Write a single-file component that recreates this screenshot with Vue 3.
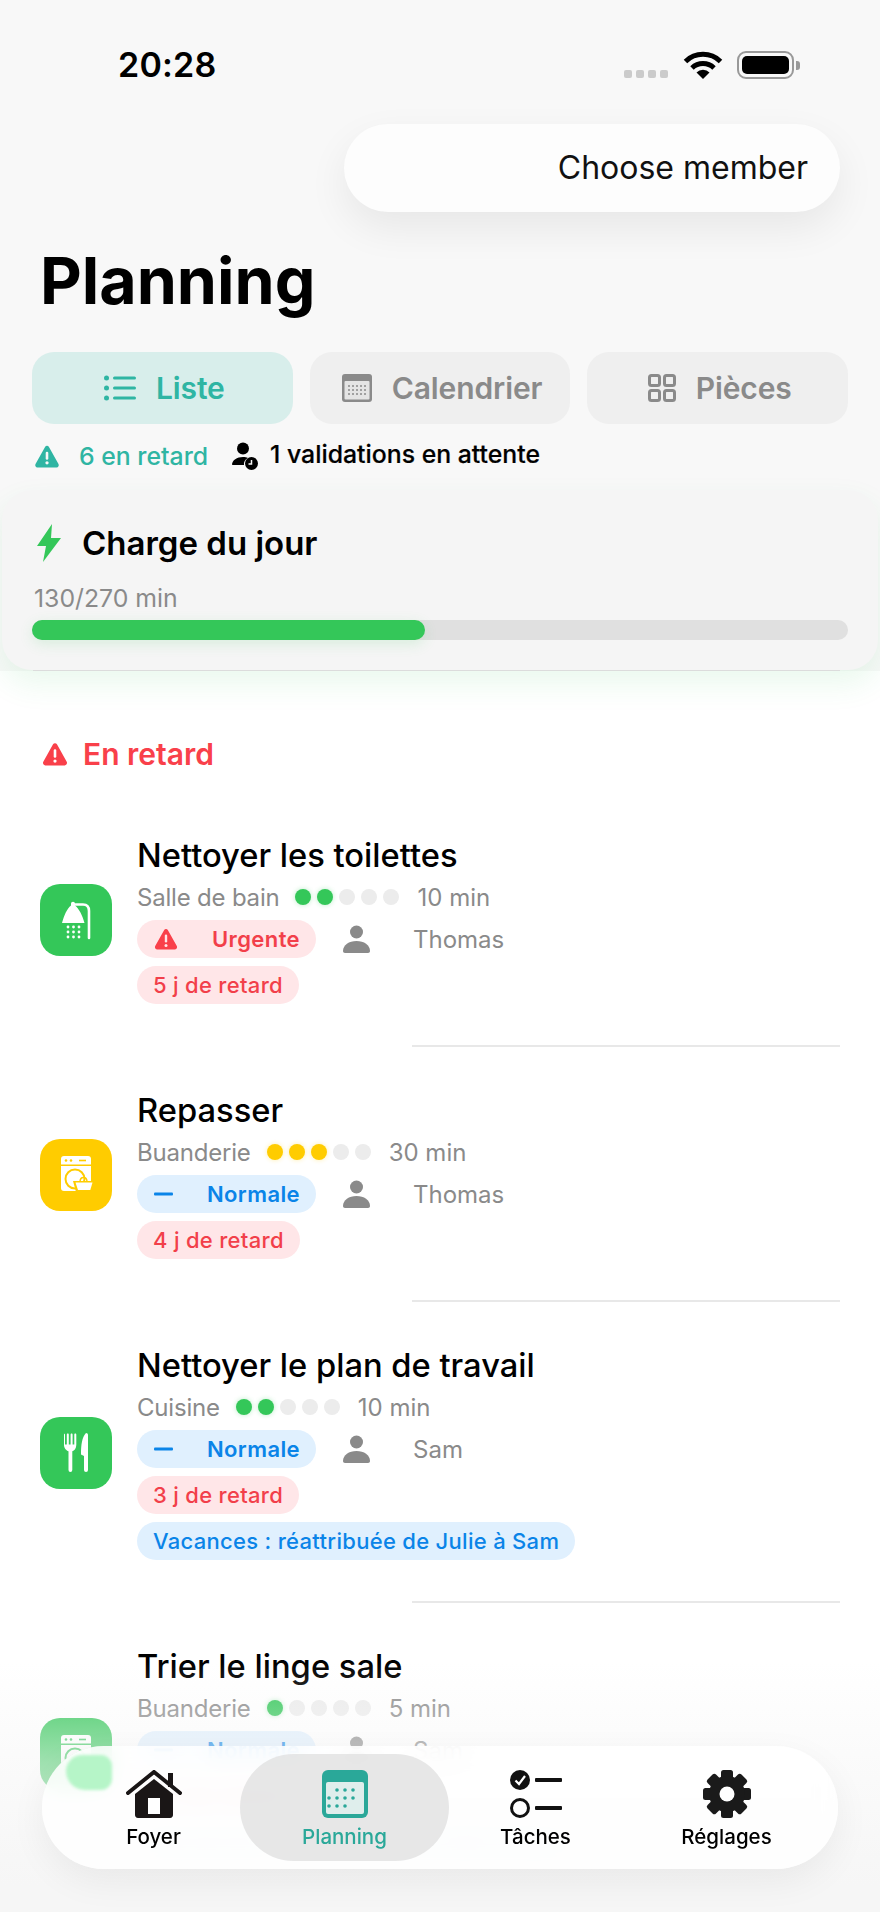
<template>
  <div class="screen">
    <div class="top">
      <div class="status">
        <span class="time">20:28</span>
        <div class="status-right">
          <div class="signal"><i v-for="n in 4" :key="n"></i></div>
          <svg class="wifi" width="40" height="29" viewBox="0 0 40 29">
            <path d="M2.5 10.5a25 25 0 0 1 35 0" fill="none" stroke="#000" stroke-width="5" />
            <path d="M9 17a16 16 0 0 1 22 0" fill="none" stroke="#000" stroke-width="5" />
            <path d="M13.5 21.5a9 9 0 0 1 13 0L20 28z" fill="#000" />
          </svg>
          <div class="battery"><i></i></div>
          <div class="battery-tip"></div>
        </div>
      </div>

      <div class="member-row">
        <div class="member">Choose member</div>
      </div>

      <h1 class="title">Planning</h1>

      <div class="tabs">
        <div class="tab active">
          <svg width="32" height="26" viewBox="0 0 32 26" fill="currentColor">
            <circle cx="2.5" cy="3" r="2.5" /><circle cx="2.5" cy="13" r="2.5" /><circle cx="2.5" cy="23" r="2.5" />
            <rect x="9" y="1.5" width="23" height="3" rx="1.5" /><rect x="9" y="11.5" width="23" height="3" rx="1.5" /><rect x="9" y="21.5" width="23" height="3" rx="1.5" />
          </svg>
          <span>Liste</span>
        </div>
        <div class="tab">
          <svg width="30" height="28" viewBox="0 0 30 28">
            <rect width="30" height="28" rx="3" fill="currentColor" />
            <rect x="2.5" y="7" width="25" height="18.5" rx="1" fill="#e4e4e4" />
            <g fill="currentColor">
              <circle v-for="d in calDots" :key="d[0] + '-' + d[1]" :cx="d[0] * 4 + 7" :cy="d[1] * 4 + 12" r="1" />
            </g>
          </svg>
          <span>Calendrier</span>
        </div>
        <div class="tab">
          <svg width="28" height="28" viewBox="0 0 28 28" fill="none" stroke="currentColor" stroke-width="3">
            <rect x="1.5" y="1.5" width="10" height="10" rx="2" /><rect x="16.5" y="1.5" width="10" height="10" rx="2" />
            <rect x="1.5" y="16.5" width="10" height="10" rx="2" /><rect x="16.5" y="16.5" width="10" height="10" rx="2" />
          </svg>
          <span>Pièces</span>
        </div>
      </div>

      <div class="stats">
        <svg class="warn" width="26" height="24" viewBox="0 0 24 22">
          <path d="M12 1.5c.8 0 1.4.4 1.8 1.1l8.8 15.7c.8 1.4-.2 3.2-1.8 3.2H3.2c-1.6 0-2.6-1.8-1.8-3.2l8.8-15.7c.4-.7 1-1.1 1.8-1.1z" fill="#2fb5a3" />
          <rect x="10.8" y="7" width="2.4" height="7.5" rx="1.2" fill="#f8f8f8" /><circle cx="12" cy="17.3" r="1.5" fill="#f8f8f8" />
        </svg>
        <span class="late-count">6 en retard</span>
        <svg class="wait" width="26" height="28" viewBox="0 0 26 28">
          <circle cx="11" cy="6.5" r="6" fill="#000" />
          <path d="M0 23c0-5 5-8 11-8 2 0 3.5.3 5 .9-3 1.5-4.5 4-4 7.1H1c-.6 0-1-.4-1-1z" fill="#000" />
          <circle cx="19.5" cy="21.5" r="6.5" fill="#000" />
          <path d="M19.5 18v4h-3" fill="none" stroke="#f8f8f8" stroke-width="1.5" />
        </svg>
        <span class="pending">1 validations en attente</span>
      </div>

      <div class="load-card">
        <div class="load-head">
          <svg width="24" height="38" viewBox="0 0 24 38">
            <path d="M15 0 0 22h9l-3 16 18-24h-10z" fill="#34c759" />
          </svg>
          <span>Charge du jour</span>
        </div>
        <div class="load-min">130/270 min</div>
        <div class="track">
          <div class="fill" :style="{ width: (130 / 270) * 100 + '%' }"></div>
        </div>
      </div>
      <div class="card-line"></div>
    </div>

    <div class="section">
      <svg width="26" height="24" viewBox="0 0 24 22">
        <path d="M12 1c.8 0 1.4.4 1.8 1.1l9 16c.8 1.4-.2 3.4-1.8 3.4H3c-1.6 0-2.6-2-1.8-3.4l9-16C10.6 1.400 11.2 1 12 1z" fill="#f9404a" />
        <rect x="10.8" y="6.5" width="2.4" height="8" rx="1.2" fill="#fff" /><circle cx="12" cy="17.5" r="1.5" fill="#fff" />
      </svg>
      <span>En retard</span>
    </div>

    <div v-for="(t, i) in tasks" :key="t.name">
      <div class="row">
        <div class="task-icon" :style="{ background: t.color }">
          <svg v-if="t.icon === 'shower'" width="72" height="72" viewBox="0 0 72 72" fill="#fff">
            <path d="M33 20.5h10c4 0 6 2.5 6 6.5v27" fill="none" stroke="#fff" stroke-width="2.6" stroke-linecap="round" />
            <path d="M31 20c0-1.500.8-2.200 2-2.200s2 .7 2 2.200v1.500c4 3 7.500 10 9.500 17.500h-22.500c2-7.500 5-14.500 9-17.500z" />
            <g><circle v-for="d in showerDots" :key="d[0] + '-' + d[1]" :cx="d[0]" :cy="d[1]" r="1.4" /></g>
          </svg>
          <svg v-else-if="t.icon === 'washer'" width="72" height="72" viewBox="0 0 72 72">
            <path d="M24 17h24a3 3 0 0 1 3 3v29a3 3 0 0 1-3 3H24a3 3 0 0 1-3-3V20a3 3 0 0 1 3-3z" fill="#fff" />
            <rect x="21" y="25.5" width="30" height="1.5" :fill="t.color" />
            <circle cx="26" cy="21.5" r="1.3" :fill="t.color" /><circle cx="31" cy="21.5" r="1.3" :fill="t.color" />
            <rect x="39" y="20.7" width="7" height="1.6" :fill="t.color" />
            <circle cx="35" cy="40" r="9.5" fill="none" :stroke="t.color" stroke-width="2" />
            <path d="M33 42h22l-3 11H36z" :fill="t.color" />
            <path d="M35.5 43.5h17l-2.200 7.500H38z" fill="#fff" />
            <path d="M40 43c0-3 1.5-4.500 3.500-4.500S47 40 47 43" fill="none" :stroke="t.color" stroke-width="1.5" />
          </svg>
          <svg v-else width="72" height="72" viewBox="0 0 72 72" fill="#fff">
            <path d="M24 16.500c.7 0 1 .5 1 1v10h1.800v-10c0-.5.4-1 1-1s1 .5 1 1v10h1.800v-10c0-.5.4-1 1-1s1 .5 1 1v10h1.700v-10c0-.5.4-1 1-1s1 .5 1 1V28c0 3.500-2 5.500-4 6.200V53a1.900 1.900 0 0 1-3.800 0V34.200c-2-.7-4.500-2.700-4.500-6.200V17.500c0-.5.5-1 1-1z" />
            <path d="M46 16c1.200 0 2 .8 2 2v35a2 2 0 0 1-4 0V39l-3-1.500C41 28 42 20 46 16z" />
          </svg>
        </div>
        <div class="task-body">
          <div class="task-name">{{ t.name }}</div>
          <div class="task-meta">
            <span class="room">{{ t.room }}</span>
            <div class="dots">
              <i
                v-for="n in 5"
                :key="n"
                :style="n <= t.level ? { background: t.color, boxShadow: '0 0 5px ' + t.color + '55' } : {}"
              ></i>
            </div>
            <span>{{ t.minutes }} min</span>
          </div>
          <div class="chips">
            <div class="chip prio" :class="t.urgent ? 'red' : 'blue'">
              <svg v-if="t.urgent" width="24" height="22" viewBox="0 0 24 22">
                <path d="M12 1c.8 0 1.4.4 1.8 1.1l9 16c.8 1.4-.2 3.4-1.8 3.4H3c-1.6 0-2.6-2-1.8-3.4l9-16C10.6 1.400 11.2 1 12 1z" fill="#f9404a" />
                <rect x="10.8" y="6.5" width="2.4" height="8" rx="1.2" fill="#ffe6e8" /><circle cx="12" cy="17.5" r="1.5" fill="#ffe6e8" />
              </svg>
              <svg v-else width="19" height="22" viewBox="0 0 19 22">
                <rect y="9.5" width="19" height="3" rx="1" fill="#0a84e8" />
              </svg>
              <span>{{ t.urgent ? 'Urgente' : 'Normale' }}</span>
            </div>
            <svg class="person" width="27" height="28" viewBox="0 0 27 28" fill="#8a8a8a">
              <circle cx="13.5" cy="7" r="6.5" />
              <path d="M0 26c0-6 6-10 13.5-10S27 20 27 26c0 1-.8 2-2 2H2c-1.200 0-2-1-2-2z" />
            </svg>
            <span class="who">{{ t.who }}</span>
          </div>
          <div class="chips"><div class="chip red">{{ t.late }} j de retard</div></div>
          <div v-if="t.note" class="chips"><div class="chip blue">{{ t.note }}</div></div>
        </div>
      </div>
      <div v-if="i < tasks.length - 1" class="row-line"></div>
    </div>

    <div class="bottom-fade"></div>

    <nav class="nav">
      <div class="blob"></div>
      <div class="nav-item">
        <svg width="56" height="48" viewBox="0 0 56 48">
          <rect x="42" y="3" width="5" height="14" fill="#1a1616" />
          <path d="M2 23 28 2l26 21" fill="none" stroke="#1a1616" stroke-width="4" stroke-linecap="round" />
          <path d="M28 9 47 24v21c0 1.500-1 3-3 3H12c-2 0-3-1.500-3-3V24z" fill="#1a1616" />
          <rect x="22" y="28" width="12" height="16" fill="#fff" />
        </svg>
        <span>Foyer</span>
      </div>
      <div class="nav-item on">
        <svg width="46" height="48" viewBox="0 0 46 48">
          <rect width="46" height="48" rx="6" fill="#2aa899" />
          <rect x="4" y="12" width="38" height="32" rx="2" fill="#dfeeec" />
          <g fill="#2aa899">
            <circle v-for="d in navDots" :key="d[0] + '-' + d[1]" :cx="d[0] * 8 + 7" :cy="d[1] * 8 + 20" r="1.8" />
          </g>
        </svg>
        <span>Planning</span>
      </div>
      <div class="nav-item">
        <svg width="52" height="48" viewBox="0 0 52 48">
          <circle cx="10" cy="10" r="10" fill="#111" />
          <path d="M5.5 10.5 9 14l6-8" fill="none" stroke="#fff" stroke-width="2.2" />
          <circle cx="10" cy="38" r="8.5" fill="none" stroke="#111" stroke-width="3" />
          <rect x="25" y="8" width="27" height="4" rx="1" fill="#111" />
          <rect x="25" y="36" width="27" height="4" rx="1" fill="#111" />
        </svg>
        <span>Tâches</span>
      </div>
      <div class="nav-item">
        <svg width="48" height="48" viewBox="0 0 48 48">
          <rect v-for="a in gearTeeth" :key="a" x="18" y="0" width="12" height="48" rx="2.5" fill="#1a1a1a" :transform="'rotate(' + a + ' 24 24)'" />
          <circle cx="24" cy="24" r="18" fill="#1a1a1a" />
          <circle cx="24" cy="24" r="7.5" fill="#fff" />
        </svg>
        <span>Réglages</span>
      </div>
    </nav>
  </div>
</template>

<script setup>
const green = '#34c759'
const yellow = '#ffcc00'

const tasks = [
  { name: 'Nettoyer les toilettes', room: 'Salle de bain', level: 2, minutes: 10, color: green, icon: 'shower', urgent: true, who: 'Thomas', late: 5 },
  { name: 'Repasser', room: 'Buanderie', level: 3, minutes: 30, color: yellow, icon: 'washer', urgent: false, who: 'Thomas', late: 4 },
  { name: 'Nettoyer le plan de travail', room: 'Cuisine', level: 2, minutes: 10, color: green, icon: 'fork', urgent: false, who: 'Sam', late: 3, note: 'Vacances : réattribuée de Julie à Sam' },
  { name: 'Trier le linge sale', room: 'Buanderie', level: 1, minutes: 5, color: green, icon: 'washer', urgent: false, who: 'Sam', late: 2, note: 'Vacances : réattribuée de Julie à Sam' }
]

// little dot grids inside the calendar icons
const calDots = []
for (let y = 0; y < 3; y++) {
  for (let x = 0; x < 5; x++) calDots.push([x, y])
}
const navDots = [[1, 0], [2, 0], [3, 0], [0, 1], [1, 1], [2, 1], [3, 1], [0, 2], [1, 2], [2, 2]]

const showerDots = []
for (const y of [43, 48, 53]) {
  for (const x of [28, 33.5, 39]) showerDots.push([x, y])
}

const gearTeeth = [0, 45, 90, 135]
</script>

<style scoped>
.screen {
  position: relative;
  width: 880px;
  height: 1912px;
  overflow: hidden;
  background: #fff;
  font-family: Inter, "Liberation Sans", sans-serif;
  color: #000;
}

.top {
  background: #f8f8f8;
}

.status {
  display: flex;
  justify-content: space-between;
  align-items: center;
  height: 50px;
  padding: 40px 80px 0 118px;
}

.time {
  font-size: 34px;
  font-weight: 600;
  line-height: 50px;
  letter-spacing: 0.2px;
}

.status-right {
  display: flex;
  align-items: center;
}

.signal {
  display: flex;
  gap: 4px;
  margin: 18px 15px 0 0;
}

.signal i {
  width: 8px;
  height: 8px;
  border-radius: 2px;
  background: #cbcbcb;
}

.wifi {
  margin-right: 14px;
}

.battery {
  box-sizing: border-box;
  width: 57px;
  height: 28px;
  padding: 3px;
  border: 2.5px solid #999;
  border-radius: 9px;
}

.battery i {
  display: block;
  height: 100%;
  border-radius: 5px;
  background: #000;
}

.battery-tip {
  width: 4px;
  height: 9px;
  margin-left: 2px;
  border-radius: 0 3px 3px 0;
  background: #999;
}

.member-row {
  display: flex;
  justify-content: flex-end;
  margin: 34px 40px 0 0;
}

.member {
  box-sizing: border-box;
  width: 496px;
  height: 88px;
  padding-right: 32px;
  border-radius: 44px;
  background: #fdfdfd;
  box-shadow: 0 16px 40px rgba(0, 0, 0, 0.07);
  font-size: 32px;
  line-height: 88px;
  text-align: right;
  color: #111;
}

.title {
  margin: 30px 0 0 40px;
  font-size: 64.5px;
  font-weight: 700;
  line-height: 78px;
}

.tabs {
  display: flex;
  gap: 17px;
  margin: 32px 32px 0;
}

.tab {
  box-sizing: border-box;
  flex: 1;
  display: flex;
  align-items: center;
  justify-content: center;
  gap: 20px;
  height: 72px;
  padding-left: 4px;
  border-radius: 22px;
  background: #efefef;
  color: #8a8a8a;
  font-size: 30px;
  font-weight: 600;
  letter-spacing: -0.1px;
}

.tab.active {
  background: #d8eeeb;
  color: #2fb5a3;
}

.stats {
  display: flex;
  align-items: center;
  height: 30px;
  margin: 17px 0 -1px 34px;
  font-size: 24.8px;
}

.warn {
  margin-right: 19px;
}

.late-count {
  font-weight: 500;
  color: #2fb5a3;
}

.wait {
  margin: 0 12px 0 24px;
}

.pending {
  font-weight: 500;
  margin-top: -4px;
  -webkit-text-stroke: 0.2px #000;
}

.load-card {
  margin: 20px 2px 0;
  padding: 33px 30px 30px;
  border-radius: 30px;
  background: #f5f5f5;
  box-shadow: 0 14px 30px rgba(52, 199, 89, 0.1);
}

.load-head {
  display: flex;
  align-items: center;
  gap: 21px;
  height: 40px;
  padding-left: 5px;
  font-size: 33px;
  font-weight: 600;
}

.load-min {
  margin: 20px 0 0 2px;
  font-size: 24.8px;
  line-height: 30px;
  color: #8a8a8a;
}

.track {
  height: 20px;
  margin-top: 7px;
  border-radius: 10px;
  background: #e0e0e0;
}

.fill {
  height: 100%;
  border-radius: 10px;
  background: #34c759;
  box-shadow: 0 4px 14px rgba(52, 199, 89, 0.15);
}

.card-line {
  position: relative;
  width: 807px;
  height: 1px;
  margin-left: 33px;
  background: #dcdcdc;
}

.section {
  display: flex;
  align-items: center;
  gap: 15px;
  height: 40px;
  margin: 63px 0 18px 42px;
  font-size: 30px;
  font-weight: 600;
  color: #f9404a;
}

.row {
  display: flex;
  align-items: center;
  gap: 25px;
  padding: 43px 40px 41px;
}

.task-icon {
  flex: none;
  width: 72px;
  height: 72px;
  border-radius: 20px;
}

.task-icon svg {
  display: block;
}

.task-name {
  font-size: 32.7px;
  font-weight: 500;
  line-height: 40px;
}

.task-meta {
  display: flex;
  align-items: center;
  gap: 17px;
  height: 30px;
  margin-top: 7px;
  font-size: 24px;
  color: #8a8a8a;
}

.room {
  letter-spacing: -0.2px;
}

.dots {
  display: flex;
  gap: 6px;
  margin: 0 1px 0 -1px;
}

.dots i {
  width: 16px;
  height: 16px;
  border-radius: 50%;
  background: #ececec;
}

.chips {
  display: flex;
  align-items: center;
  margin-top: 8px;
}

.chip {
  box-sizing: border-box;
  height: 38px;
  padding: 0 16px;
  border-radius: 19px;
  font-size: 22px;
  font-weight: 500;
  line-height: 38px;
  letter-spacing: 0.3px;
}

.chip.red {
  background: #ffe6e8;
  color: #f23f4a;
}

.chip.blue {
  background: #e0f0fe;
  color: #0a84e8;
}

.prio {
  display: flex;
  align-items: center;
  justify-content: space-between;
  width: 179px;
  padding: 0 16px 0 17px;
  font-weight: 600;
  letter-spacing: 0.4px;
}

.person {
  margin-left: 27px;
}

.who {
  margin-left: 43px;
  font-size: 24px;
  color: #8a8a8a;
}

.row-line {
  width: 428px;
  height: 2px;
  margin-left: 412px;
  background: #e8e8e8;
}

.bottom-fade {
  position: absolute;
  left: 0;
  right: 0;
  bottom: 0;
  height: 250px;
  background: linear-gradient(rgba(247, 247, 247, 0), rgba(247, 247, 247, 0.55) 40%, #f6f6f6 90%);
  pointer-events: none;
}

.nav {
  position: absolute;
  left: 42px;
  top: 1746px;
  box-sizing: border-box;
  display: grid;
  grid-template-columns: repeat(4, 191px);
  width: 796px;
  height: 123px;
  padding: 8px 16px;
  border-radius: 62px;
  background: rgba(255, 255, 255, 0.86);
  backdrop-filter: blur(10px);
  box-shadow: 0 12px 36px rgba(0, 0, 0, 0.06);
}

.blob {
  position: absolute;
  left: 24px;
  top: 9px;
  width: 46px;
  height: 35px;
  border-radius: 20px 14px 14px 24px;
  background: #b6f5c8;
  filter: blur(1.5px);
}

.nav-item {
  position: relative;
  display: flex;
  flex-direction: column;
  align-items: center;
  padding-top: 16px;
  font-size: 20.5px;
  font-weight: 500;
  line-height: 26px;
}

.nav-item svg {
  display: block;
  margin-bottom: 6px;
}

.nav-item.on {
  margin: 0 -9px;
  border-radius: 54px;
  background: rgba(222, 222, 222, 0.72);
  color: #2aa899;
}
</style>

<style>
html,
body {
  background: #fff;
}
</style>
